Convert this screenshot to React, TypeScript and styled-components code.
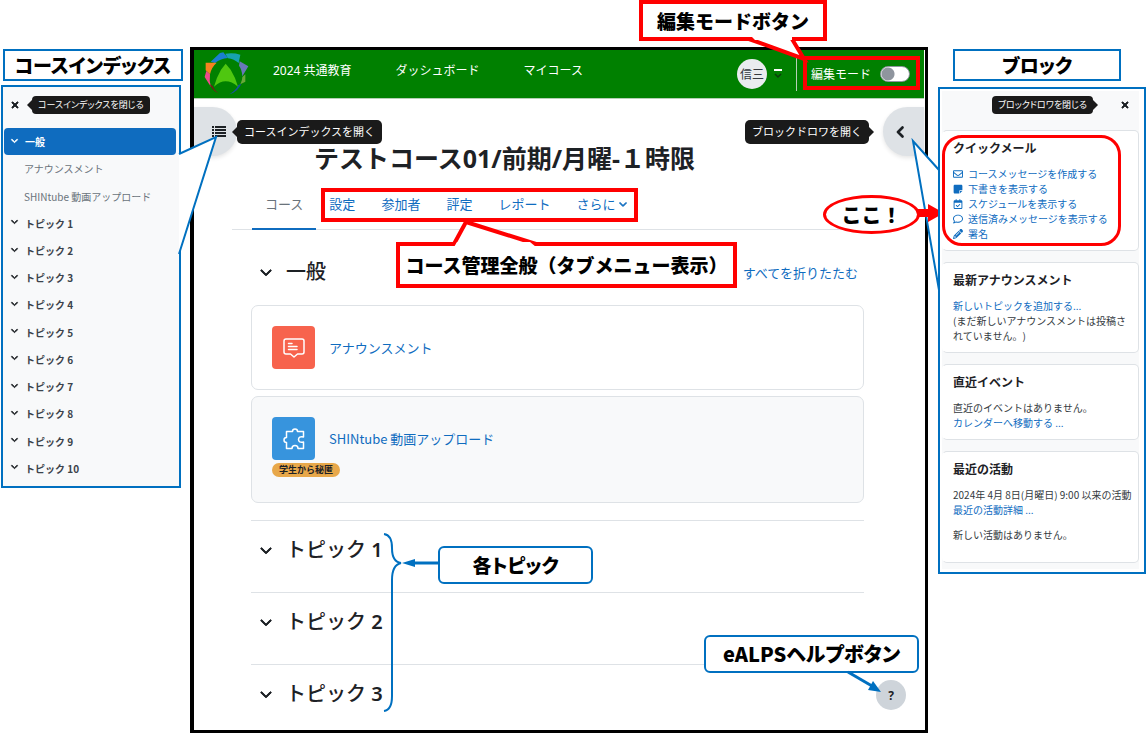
import React from "react";
import styled, { createGlobalStyle, css } from "styled-components";
import {
  FaChevronDown,
  FaChevronLeft,
  FaNoteSticky,
  FaPencil,
  FaRegCalendarCheck,
  FaRegComment,
  FaRegEnvelope,
  FaXmark,
} from "react-icons/fa6";

const blue = "#0070c0";
const link = "#0f6cbf";
const red = "#ff0000";
const line = "#dee2e6";
const ink = "#1d2125";

const GlobalStyle = createGlobalStyle`
  *, *::before, *::after { box-sizing: border-box; }
  body {
    margin: 0;
    background: #fff;
    color: ${ink};
    font-family: "Noto Sans", "Noto Sans CJK JP", sans-serif;
    font-size: 13px;
    text-spacing-trim: space-all;
  }
  h1, h2, h3, p, ul { margin: 0; padding: 0; }
  ul { list-style: none; }
  a { color: ${link}; text-decoration: none; }
  button { font: inherit; color: inherit; border: 0; background: none; padding: 0; cursor: pointer; }
`;

const Page = styled.div`
  display: grid;
  grid-template-columns: 190px minmax(600px, 1fr) 219px;
  align-items: start;
`;

const popFont = css`
  font-family: "Noto Sans CJK JP", sans-serif;
  font-weight: 900;
  color: #000;
`;

/* ---------- side columns ---------- */

const SideColumn = styled.div<{ $side: "left" | "right" }>`
  display: flex;
  flex-direction: column;
  padding: ${(p) => (p.$side === "left" ? "49px 0 0 1px" : "49px 1px 0 10px")};
  gap: ${(p) => (p.$side === "left" ? 4 : 6)}px;
`;

const PanelTitle = styled.h2<{ $side: "left" | "right" }>`
  ${popFont}
  font-feature-settings: "palt";
  border: 2px solid ${blue};
  background: #fff;
  height: 32px;
  line-height: 28px;
  font-size: 19px;
  text-align: center;
  margin: ${(p) => (p.$side === "left" ? "0 7px 0 2px" : "0 25px 0 15px")};
`;

const Panel = styled.aside<{ $side: "left" | "right" }>`
  position: relative;
  border: 2px solid ${blue};
  background: #f8f9fa;
  margin-right: ${(p) => (p.$side === "left" ? 9 : 0)}px;
  ${(p) =>
    p.$side === "left"
      ? "padding: 9px 3px 4px 1px;"
      : "background: #fff; padding: 2px 5px 3px 2px;"}
`;

const PanelBar = styled.div<{ $side: "left" | "right" }>`
  display: flex;
  align-items: center;
  height: 18px;
  ${(p) =>
    p.$side === "left"
      ? "padding-left: 6px; gap: 12px;"
      : "justify-content: flex-end; padding-right: 9px; gap: 27px; margin: 5px 0 16px;"}
`;

const CloseButton = styled.button`
  display: flex;
  font-size: 10px;
  svg { stroke: currentColor; stroke-width: 50; }
`;

const Tooltip = styled.span<{ $point: "left" | "right"; $small?: boolean }>`
  position: relative;
  background: #1a1a1a;
  color: #fff;
  border-radius: ${(p) => (p.$small ? 4 : 5)}px;
  font-size: ${(p) => (p.$small ? 9 : 11)}px;
  line-height: ${(p) => (p.$small ? 18 : 24)}px;
  padding: 0 ${(p) => (p.$small ? 6 : 7)}px;
  white-space: nowrap;
  ${(p) => p.$small && `font-feature-settings: "palt";`}

  &::before {
    content: "";
    position: absolute;
    top: 50%;
    margin-top: -5px;
    border: 5px solid transparent;
    ${(p) =>
      p.$point === "left"
        ? "right: 100%; border-left: 0; border-right-color: #1a1a1a;"
        : "left: 100%; border-right: 0; border-left-color: #1a1a1a;"}
  }
`;

const IndexList = styled.ul`
  display: grid;
  grid-auto-rows: 1fr;
  height: 354px;
  margin-top: 14px;
  font-family: "Noto Sans CJK JP", sans-serif;
  font-size: 10px;
`;

const IndexItem = styled.li<{ $active?: boolean; $child?: boolean }>`
  display: flex;
  align-items: center;
  gap: 7px;
  padding-left: ${(p) => (p.$child ? 20 : 7)}px;
  border-radius: 4px;
  font-weight: ${(p) => (p.$child ? 400 : 700)};
  background: ${(p) => (p.$active ? link : "transparent")};
  a { color: ${(p) => (p.$active ? "#fff" : p.$child ? "#6a737b" : "#3b434b")}; }
  svg { width: 7px; height: 7px; color: ${(p) => (p.$active ? "#fff" : "#1d2125")}; stroke: currentColor; stroke-width: 60; overflow: visible; margin-bottom: 3px; }
`;

const Blocks = styled.div`
  display: flex;
  flex-direction: column;
  gap: 11px;
  background: #f8f9fa;
  padding-bottom: 6px;
`;

const Block = styled.section<{ $tall?: boolean }>`
  background: #fff;
  border: 1px solid ${line};
  border-left-color: transparent;
  border-radius: 5px;
  padding: 8px 10px ${(p) => (p.$tall ? 20 : 9)}px;
  font-family: "Noto Sans CJK JP", sans-serif;
  font-size: 10px;
  line-height: 15px;
  color: #343a40;
  h3 { font-size: 12px; line-height: 18px; color: ${ink}; margin-bottom: 9px; }
  p + p { margin-top: 10px; }
`;

const DateLine = styled.p`
  white-space: nowrap;
`;

const MailLink = styled.a`
  display: flex;
  align-items: center;
  gap: 5px;
  height: 15px;
  white-space: nowrap;
  svg { width: 10px; height: 10px; }
`;

/* ---------- main window ---------- */

const MainColumn = styled.main`
  position: relative;
  margin-top: 47px;
`;

const Frame = styled.div`
  border: solid #000;
  border-width: 3px 3px 3px 4px;
  padding-right: 1px;
  background: #fff;
`;

const Header = styled.header`
  display: flex;
  align-items: center;
  height: 49px;
  padding: 0 14px 0 6px;
  background: #008000;
  border-bottom: 1px solid #b5cfb5;
  color: #fff;
  font-size: 12px;
`;

const MainNav = styled.nav`
  display: flex;
  gap: 44px;
  margin: -8px auto 0 21px;
  a { color: #fff; white-space: nowrap; }
`;

const Avatar = styled.span`
  display: grid;
  place-items: center;
  width: 30px;
  height: 30px;
  border-radius: 50%;
  background: #e9ecef;
  color: #343a40;
  font-size: 12px;
`;

const UserMenu = styled.button`
  display: flex;
  align-items: center;
  gap: 7px;
`;

const EditMode = styled.label`
  display: flex;
  align-items: center;
  gap: 9px;
  height: 34px;
  margin-left: 14px;
  padding-left: 14px;
  border-left: 1px solid #b5cfb5;
  white-space: nowrap;
`;

const Switch = styled.input`
  appearance: none;
  margin: 0;
  width: 30px;
  height: 16px;
  border-radius: 8px;
  border: 1px solid #8f959e;
  background: radial-gradient(circle at 7px 7px, #8f959e 6px, #fff 7px);
`;

const Content = styled.div`
  padding: 42px 40px 0 38px;
`;

const CourseTitle = styled.h1`
  font-size: 25px;
  line-height: 34px;
  padding-left: 82px;
`;

const Tabs = styled.nav`
  display: flex;
  margin-top: 11px;
  padding-left: 20px;
  border-bottom: 1px solid ${line};
`;

const Tab = styled.a<{ $active?: boolean }>`
  display: flex;
  align-items: center;
  gap: 4px;
  padding: 0 13px 6px;
  margin-bottom: -1px;
  line-height: 36px;
  white-space: nowrap;
  color: ${(p) => (p.$active ? "#6a737b" : link)};
  border-bottom: 2px solid ${(p) => (p.$active ? link : "transparent")};
  svg { width: 8px; height: 8px; stroke: currentColor; stroke-width: 50; }
`;

const Sections = styled.div`
  padding: 0 20px 0 19px;
`;

const Section = styled.section`
  padding: 15px 0 28px;
  & + & { border-top: 1px solid ${line}; }
  &:first-child { padding: 28px 0 17px; }
  &:last-child { padding-bottom: 22px; }
`;

const SectionHead = styled.div`
  display: flex;
  align-items: center;
  padding: 0 6px 0 9px;
  height: 28px;
  h2 { font-size: 20px; line-height: 28px; margin-right: auto; font-weight: 500; }
  b { font-weight: 600; }
`;

const Collapse = styled.button`
  display: flex;
  margin-right: 14px;
  svg { width: 12px; height: 12px; stroke: currentColor; stroke-width: 40; }
`;

const Activities = styled.div`
  display: grid;
  gap: 6px;
  margin-top: 19px;
`;

const Activity = styled.article<{ $hidden?: boolean }>`
  border: 1px solid ${line};
  border-radius: 7px;
  padding: 20px;
  min-height: ${(p) => (p.$hidden ? 107 : 85)}px;
  background: ${(p) => (p.$hidden ? "#f8f9fa" : "#fff")};
`;

const ActivityLink = styled.a`
  display: flex;
  align-items: center;
  gap: 14px;
  font-family: "Noto Sans CJK JP", sans-serif;
`;

const ActivityIcon = styled.span<{ $color: string }>`
  display: grid;
  place-items: center;
  width: 43px;
  height: 43px;
  border-radius: 4px;
  background: ${(p) => p.$color};
`;

const Badge = styled.span`
  display: block;
  width: fit-content;
  margin-top: 3px;
  padding: 0 7px;
  border-radius: 7px;
  background: #e8a84a;
  font-size: 9px;
  font-weight: 700;
  line-height: 14px;
`;

/* Drawer handles float over the page content at both window edges. */
const DrawerHandle = styled.div<{ $side: "left" | "right" }>`
  position: absolute;
  top: 60px;
  ${(p) => (p.$side === "left" ? "left: 4px;" : "right: 4px; flex-direction: row-reverse;")}
  display: flex;
  align-items: center;
  gap: ${(p) => (p.$side === "left" ? 0 : 14)}px;
`;

const HandleButton = styled.button<{ $side: "left" | "right" }>`
  display: flex;
  align-items: center;
  width: ${(p) => (p.$side === "left" ? 43 : 41)}px;
  height: 49px;
  padding-left: ${(p) => (p.$side === "left" ? 18 : 12)}px;
  background: ${line};
  border-radius: ${(p) => (p.$side === "left" ? "0 25px 25px 0" : "25px 0 0 25px")};
  box-shadow: 0 2px 4px rgba(0, 0, 0, 0.1);
`;

const BackChevron = styled(FaChevronLeft)`
  width: 12px;
  height: 12px;
  stroke: currentColor;
  stroke-width: 50;
`;

const HelpButton = styled.button`
  position: absolute;
  right: 22px;
  bottom: 23px;
  width: 30px;
  height: 30px;
  border-radius: 50%;
  background: #ced4da;
  font-size: 12px;
  font-weight: 700;
`;

/* ---------- annotations drawn over the window ---------- */

interface Spot {
  $left?: number;
  $right?: number;
  $top: number;
  $w: number;
  $h: number;
}

const spot = css<Spot>`
  position: absolute;
  top: ${(p) => p.$top}px;
  ${(p) => (p.$left !== undefined ? `left: ${p.$left}px;` : `right: ${p.$right}px;`)}
  width: ${(p) => p.$w}px;
  height: ${(p) => p.$h}px;
`;

const Callout = styled.p<Spot & { $tone: "red" | "blue"; $size?: number }>`
  ${spot}
  ${popFont}
  display: flex;
  align-items: center;
  justify-content: center;
  background: #fff;
  border: ${(p) => (p.$tone === "red" ? `4px solid ${red}` : `2px solid ${blue}`)};
  border-radius: ${(p) => (p.$tone === "red" ? 0 : 6)}px;
  font-size: ${(p) => p.$size ?? 19}px;
  font-feature-settings: ${(p) => (p.$tone === "red" ? "normal" : `"palt"`)};
  line-height: 28px;
  white-space: nowrap;
`;

const Highlight = styled.div<Spot & { $round?: boolean }>`
  ${spot}
  border: ${(p) => (p.$round ? 3 : 4)}px solid ${red};
  border-radius: ${(p) => (p.$round ? 20 : 0)}px;
  pointer-events: none;
`;

const Bubble = styled.p<Spot>`
  ${spot}
  ${popFont}
  display: grid;
  place-items: center;
  border: 3px solid ${red};
  border-radius: 50%;
  background: #fff;
  font-size: 20px;
  line-height: 30px;
`;

const Mark = styled.svg<Spot>`
  ${spot}
  overflow: visible;
  pointer-events: none;
`;

const Logo = () => (
  <svg width="52" height="50" viewBox="0 0 156 150" aria-label="eALPS" role="img">
    <path d="M32 38 L60 12 L70 10 L84 27 Q62 28 45 42 Z" fill="#1a7fd0" />
    <path d="M76 14 Q100 10 121 17 L116 42 Q102 30 84 28 Z" fill="#17a2b0" />
    <path d="M119 37 L145 52 L127 82 Q126 62 117 50 Z" fill="#6878b8" />
    <path d="M136 76 L136 98 L121 106 Q127 94 127 84 Z" fill="#6aa83a" />
    <path d="M17 41 L50 41 Q34 55 30 76 L17 64 Z" fill="#f58220" />
    <path d="M19 66 L14 84 L33 114 Q27 95 30 76 Z" fill="#ee4a8b" />
    <path d="M29 106 Q38 126 55 133 Q42 122 37 110 Z" fill="#7a1a1a" />
    <path d="M124 104 Q114 128 88 136 Q108 124 115 108 Z" fill="#15539e" />
    <path d="M77 44 L63 62 Q48 88 42 113 Q60 97 77 97 Q95 97 114 113 Q107 86 92 62 Z" fill="#4fc710" />
  </svg>
);

const ListIcon = () => (
  <svg width="14" height="12" viewBox="0 0 14 12" stroke={ink} strokeWidth="2">
    <path d="M0 1 H2 M3 1 H14 M0 4 H2 M3 4 H14 M0 7 H2 M3 7 H14 M0 10 H2 M3 10 H14" />
  </svg>
);

const ForumIcon = () => (
  <svg width="22" height="22" viewBox="0 0 22 22" fill="none" stroke="#fff" strokeWidth="1.5" strokeLinejoin="round" strokeLinecap="round">
    <path d="M3 2 H19 Q21 2 21 4 V15 Q21 17 19 17 H14.500 L11 20 L7.500 17 H3 Q1 17 1 15 V4 Q1 2 3 2 Z" />
    <path d="M5.500 6.500 H9 M5.500 9.500 H14 M5.500 12.500 H14" />
  </svg>
);

const PuzzleIcon = () => (
  <svg width="22" height="22" viewBox="0 0 22 22" fill="none" stroke="#fff" strokeWidth="1.5" strokeLinejoin="round">
    <path d="M3.500 3.500 H9.500 Q9.500 1 12 1 Q14.500 1 14.500 3.500 H20.500 V9 Q15.500 8 15.500 11.500 Q15.500 15 20.500 14 V20.500 H15 Q15 17.500 12 17.500 Q9 17.500 9 20.500 H3.500 V14.500 Q1 14.500 1 12 Q1 9.500 3.500 9.500 Z" />
  </svg>
);

const topics = [1, 2, 3, 4, 5, 6, 7, 8, 9, 10];

const mailLinks = [
  { icon: FaRegEnvelope, text: "コースメッセージを作成する" },
  { icon: FaNoteSticky, text: "下書きを表示する" },
  { icon: FaRegCalendarCheck, text: "スケジュールを表示する" },
  { icon: FaRegComment, text: "送信済みメッセージを表示する" },
  { icon: FaPencil, text: "署名" },
];

const CourseIndex = () => (
  <SideColumn $side="left">
    <PanelTitle $side="left">コースインデックス</PanelTitle>
    <Panel $side="left">
      <PanelBar $side="left">
        <CloseButton aria-label="閉じる"><FaXmark /></CloseButton>
        <Tooltip $point="left" $small>コースインデックスを閉じる</Tooltip>
      </PanelBar>
      <IndexList>
        <IndexItem $active><FaChevronDown /><a href="#general">一般</a></IndexItem>
        <IndexItem $child><a href="#announce">アナウンスメント</a></IndexItem>
        <IndexItem $child><a href="#shintube">SHINtube 動画アップロード</a></IndexItem>
        {topics.map((n) => (
          <IndexItem key={n}><FaChevronDown /><a href={`#topic-${n}`}>トピック {n}</a></IndexItem>
        ))}
      </IndexList>
    </Panel>
  </SideColumn>
);

const BlockDrawer = () => (
  <SideColumn $side="right">
    <PanelTitle $side="right">ブロック</PanelTitle>
    <Panel $side="right">
      <Blocks>
        <div>
          <PanelBar $side="right">
            <Tooltip $point="right" $small>ブロックドロワを閉じる</Tooltip>
            <CloseButton aria-label="閉じる"><FaXmark /></CloseButton>
          </PanelBar>
          <Block>
            <h3>クイックメール</h3>
            <ul>
              {mailLinks.map(({ icon: Icon, text }) => (
                <li key={text}><MailLink href="#mail"><Icon />{text}</MailLink></li>
              ))}
            </ul>
          </Block>
        </div>
        <Block>
          <h3>最新アナウンスメント</h3>
          <a href="#new">新しいトピックを追加する...</a>
          <p>(まだ新しいアナウンスメントは投稿されていません。)</p>
        </Block>
        <Block>
          <h3>直近イベント</h3>
          <p>直近のイベントはありません。</p>
          <a href="#calendar">カレンダーへ移動する ...</a>
        </Block>
        <Block $tall>
          <h3>最近の活動</h3>
          <DateLine>
            2024年 4月 8日(月曜日) 9:00 以来の活動
            <br />
            <a href="#recent">最近の活動詳細 ...</a>
          </DateLine>
          <p>新しい活動はありません。</p>
        </Block>
      </Blocks>
      <Highlight $round $left={2} $top={46} $w={179} $h={111} />
    </Panel>
  </SideColumn>
);

const Annotations = () => (
  <>
    <Mark $left={-12} $top={88} $w={40} $h={120} viewBox="0 0 40 120">
      <path d="M1 19 L38 2 L1 119" fill="#fff" stroke={blue} strokeWidth="2" />
    </Mark>
    <Mark $right={-12} $top={92} $w={28} $h={152} viewBox="0 0 28 152">
      <path d="M27 31 L1 2 L27 151" fill="#fff" stroke={blue} strokeWidth="2" />
    </Mark>

    <Callout $tone="red" $right={101} $top={-47} $w={188} $h={41}>編集モードボタン</Callout>
    <Highlight $right={8} $top={9} $w={117} $h={34} />
    <Mark $right={118} $top={-12} $w={64} $h={28} viewBox="0 0 64 28">
      <path d="M3 4 L58 24 L46 4" fill="#fff" stroke={red} strokeWidth="4" />
      <path d="M4 0 H46 V5 H9 Z" fill="#fff" />
    </Mark>

    <Highlight $left={131} $top={141} $w={317} $h={34} />
    <Callout $tone="red" $left={206} $top={195} $w={341} $h={46}>コース管理全般（タブメニュー表示）</Callout>
    <Mark $left={262} $top={172} $w={90} $h={30} viewBox="0 0 90 30">
      <path d="M2 25 L14 3 L84 25" fill="#fff" stroke={red} strokeWidth="4" />
      <path d="M5 23 H78 L84 28 H2 Z" fill="#fff" />
    </Mark>

    <Mark $left={193} $top={485} $w={56} $h={182} viewBox="0 0 56 182">
      <path d="M1 2 Q9 3 9 16 Q9 30 18 31 Q9 33 9 48 V164 Q9 178 1 179" fill="none" stroke={blue} strokeWidth="2" />
      <path d="M30 31 H55" stroke={blue} strokeWidth="3" />
      <path d="M19 31 L32 27 V35 Z" fill={blue} />
    </Mark>
    <Callout $tone="blue" $left={248} $top={499} $w={155} $h={38}>各トピック</Callout>

    <Callout $tone="blue" $size={20} $right={9} $top={588} $w={215} $h={38}>eALPSヘルプボタン</Callout>
    <Mark $right={46} $top={624} $w={36} $h={24} viewBox="0 0 36 24">
      <path d="M2 1 L26 15" stroke={blue} strokeWidth="3" />
      <path d="M35 21 L22 19 L27 10 Z" fill={blue} />
    </Mark>

    <Mark $right={-16} $top={157} $w={28} $h={20} viewBox="0 0 28 20">
      <path d="M1 5 H12 V0 L28 9 L12 18 V13 H1 Z" fill={red} />
    </Mark>
    <Bubble $right={8} $top={148} $w={97} $h={39}>ここ！</Bubble>
  </>
);

export default function App() {
  return (
    <>
      <GlobalStyle />
      <Page lang="ja">
        <CourseIndex />
        <MainColumn>
          <Frame>
            <Header>
              <Logo />
              <MainNav>
                <a href="#home">2024 共通教育</a>
                <a href="#dashboard">ダッシュボード</a>
                <a href="#courses">マイコース</a>
              </MainNav>
              <UserMenu aria-label="ユーザメニュー">
                <Avatar>信三</Avatar>
                <svg width="8" height="12" viewBox="0 0 8 12" fill="none">
                  <path d="M0 2 H8" stroke="#fff" strokeWidth="2" />
                  <path d="M1 6 L4 9 L7 6" stroke="#0b3d0b" strokeWidth="1.500" />
                </svg>
              </UserMenu>
              <EditMode>
                編集モード
                <Switch type="checkbox" />
              </EditMode>
            </Header>
            <Content>
              <CourseTitle>テストコース01/前期/月曜-１時限</CourseTitle>
              <Tabs>
                <Tab href="#course" $active>コース</Tab>
                <Tab href="#settings">設定</Tab>
                <Tab href="#members">参加者</Tab>
                <Tab href="#grades">評定</Tab>
                <Tab href="#reports">レポート</Tab>
                <Tab href="#more">さらに<FaChevronDown /></Tab>
              </Tabs>
              <Sections>
                <Section id="general">
                  <SectionHead>
                    <Collapse aria-label="一般を折りたたむ"><FaChevronDown /></Collapse>
                    <h2>一般</h2>
                    <a href="#collapse">すべてを折りたたむ</a>
                  </SectionHead>
                  <Activities>
                    <Activity>
                      <ActivityLink href="#announce">
                        <ActivityIcon $color="#f7634d"><ForumIcon /></ActivityIcon>
                        アナウンスメント
                      </ActivityLink>
                    </Activity>
                    <Activity $hidden>
                      <ActivityLink href="#shintube">
                        <ActivityIcon $color="#3794dd"><PuzzleIcon /></ActivityIcon>
                        SHINtube 動画アップロード
                      </ActivityLink>
                      <Badge>学生から秘匿</Badge>
                    </Activity>
                  </Activities>
                </Section>
                {topics.slice(0, 3).map((n) => (
                  <Section key={n} id={`topic-${n}`}>
                    <SectionHead>
                      <Collapse aria-label={`トピック ${n} を折りたたむ`}><FaChevronDown /></Collapse>
                      <h2>トピック <b>{n}</b></h2>
                    </SectionHead>
                  </Section>
                ))}
              </Sections>
            </Content>
          </Frame>
          <DrawerHandle $side="left">
            <HandleButton $side="left" aria-label="コースインデックス"><ListIcon /></HandleButton>
            <Tooltip $point="left">コースインデックスを開く</Tooltip>
          </DrawerHandle>
          <DrawerHandle $side="right">
            <HandleButton $side="right" aria-label="ブロックドロワ"><BackChevron /></HandleButton>
            <Tooltip $point="right">ブロックドロワを開く</Tooltip>
          </DrawerHandle>
          <HelpButton aria-label="ヘルプ">?</HelpButton>
          <Annotations />
        </MainColumn>
        <BlockDrawer />
      </Page>
    </>
  );
}
